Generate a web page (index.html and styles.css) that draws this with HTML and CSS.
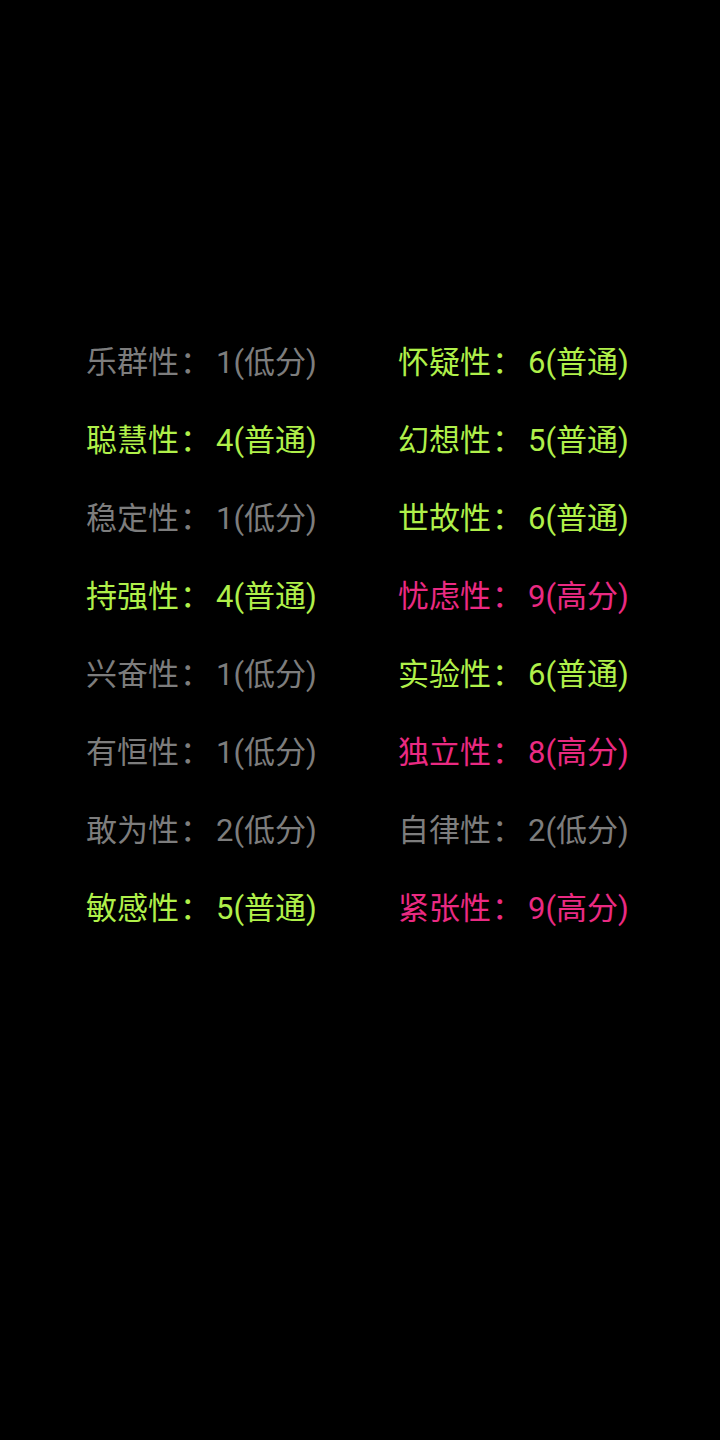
FILE: index.html
```html
<!DOCTYPE html>
<html lang="zh">
<head>
<meta charset="utf-8">
<link rel="stylesheet" href="styles.css">
</head>
<body>
<div class="grid">
  <div class="item low">乐群性<span class="colon">：</span>1(低分)</div>
  <div class="item mid">怀疑性<span class="colon">：</span>6(普通)</div>
  <div class="item mid">聪慧性<span class="colon">：</span>4(普通)</div>
  <div class="item mid">幻想性<span class="colon">：</span>5(普通)</div>
  <div class="item low">稳定性<span class="colon">：</span>1(低分)</div>
  <div class="item mid">世故性<span class="colon">：</span>6(普通)</div>
  <div class="item mid">持强性<span class="colon">：</span>4(普通)</div>
  <div class="item high">忧虑性<span class="colon">：</span>9(高分)</div>
  <div class="item low">兴奋性<span class="colon">：</span>1(低分)</div>
  <div class="item mid">实验性<span class="colon">：</span>6(普通)</div>
  <div class="item low">有恒性<span class="colon">：</span>1(低分)</div>
  <div class="item high">独立性<span class="colon">：</span>8(高分)</div>
  <div class="item low">敢为性<span class="colon">：</span>2(低分)</div>
  <div class="item low">自律性<span class="colon">：</span>2(低分)</div>
  <div class="item mid">敏感性<span class="colon">：</span>5(普通)</div>
  <div class="item high">紧张性<span class="colon">：</span>9(高分)</div>
</div>
</body>
</html>
```

FILE: styles.css
```css
html, body {
  margin: 0;
  padding: 0;
  background: #000;
  height: 1440px;
}
.grid {
  display: grid;
  grid-template-columns: 312px 312px;
  padding: 324px 0 0 86px;
}
.item {
  font-family: Roboto, "Noto Sans CJK SC", sans-serif;
  font-size: 31px;
  line-height: 78px;
  white-space: nowrap;
}
.colon {
  padding-left: 1px;
  padding-right: 5px;
}
.low { color: #7d7d7d; }
.mid { color: #b0f04a; }
.high { color: #ea2a82; }
```
